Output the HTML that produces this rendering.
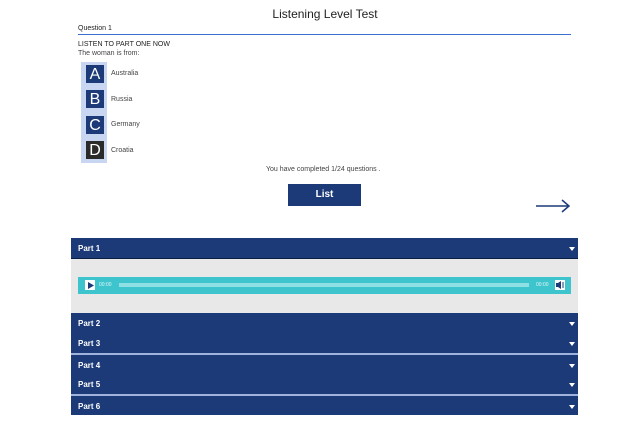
<!DOCTYPE html><html><head><style>
body{margin:0;width:640px;height:432px;background:#fff;font-family:"Liberation Sans",sans-serif;position:relative;overflow:hidden;color:#222}
.a{position:absolute}
.bar{position:absolute;left:71px;width:507px;background:#1c3a78;color:#fff;font-size:8px;font-weight:bold}
.bar span{position:absolute;left:7px;top:6px}
.bar i{position:absolute;right:3px;top:6px;width:6px;height:4px}
.box{position:absolute;left:86px;width:18px;height:18px;background:#1c3a78;color:#fff;font-size:16px;text-align:center;line-height:19px}
.opt{position:absolute;left:111px;font-size:7px;color:#444}
</style></head><body>
<div class="a" style="left:0;width:650px;top:7px;text-align:center;font-size:12px;color:#222">Listening Level Test</div>
<div class="a" style="left:78px;top:25px;font-size:7px">Question 1</div>
<div class="a" style="left:78px;top:34px;width:493px;height:1px;background:#3a6fd0"></div>
<div class="a" style="left:78px;top:41px;font-size:7px">LISTEN TO PART ONE NOW</div>
<div class="a" style="left:78px;top:50px;font-size:7px;color:#444">The woman is from:</div>
<div class="a" style="left:81px;top:62px;width:26px;height:101px;background:#c9d6f2"></div>
<div class="box" style="top:65px">A</div><div class="opt" style="top:70px">Australia</div>
<div class="box" style="top:90px">B</div><div class="opt" style="top:96px">Russia</div>
<div class="box" style="top:116px">C</div><div class="opt" style="top:121px">Germany</div>
<div class="box" style="top:141px;background:#2a2a2a">D</div><div class="opt" style="top:147px">Croatia</div>
<div class="a" style="left:266px;top:166px;font-size:7px;color:#444">You have completed 1/24 questions .</div>
<div class="a" style="left:288px;top:184px;width:73px;height:22px;background:#1c3a78;color:#fff;font-size:10px;font-weight:bold;text-align:center;line-height:22px">List</div>
<svg class="a" style="left:535px;top:199px" width="36" height="14"><path d="M1 7H34M27 1L34 7L27 13" stroke="#1c3a78" stroke-width="1.5" fill="none"/></svg>
<div class="bar" style="top:238px;height:20px;border-bottom:1px solid #0d1e45"><span>Part 1</span><i><svg width="6" height="4"><path d="M0 0H6L3 4Z" fill="#fff"/></svg></i></div>
<div class="a" style="left:71px;top:259px;width:507px;height:54px;background:#e8e8e8"></div>
<div class="a" style="left:78px;top:277px;width:493px;height:17px;background:#3ec4cc"></div>
<div class="a" style="left:85px;top:280px;width:10px;height:10px;background:#fff"></div>
<svg class="a" style="left:86px;top:281px" width="9" height="9"><path d="M2 1L8 4.5L2 8Z" fill="#1c3a78"/></svg>
<div class="a" style="left:99px;top:282px;font-size:5px;color:#e0f7f8">00:00</div>
<div class="a" style="left:119px;top:283px;width:410px;height:4px;background:#8ee0e5"></div>
<div class="a" style="left:536px;top:282px;font-size:5px;color:#e0f7f8">00:00</div>
<svg class="a" style="left:555px;top:280px" width="10" height="10"><rect width="10" height="10" fill="#fff"/><path d="M1 3H3L6 1V9L3 7H1Z" fill="#1c3a78"/><path d="M8 2V8" stroke="#1c3a78"/></svg>
<div class="bar" style="top:313px;height:20px"><span>Part 2</span><i><svg width="6" height="4"><path d="M0 0H6L3 4Z" fill="#fff"/></svg></i></div>
<div class="bar" style="top:333px;height:20px"><span>Part 3</span><i><svg width="6" height="4"><path d="M0 0H6L3 4Z" fill="#fff"/></svg></i></div>
<div class="a" style="left:71px;top:353px;width:507px;height:2px;background:#9fb3dc"></div>
<div class="bar" style="top:355px;height:19px"><span>Part 4</span><i><svg width="6" height="4"><path d="M0 0H6L3 4Z" fill="#fff"/></svg></i></div>
<div class="bar" style="top:374px;height:20px"><span>Part 5</span><i><svg width="6" height="4"><path d="M0 0H6L3 4Z" fill="#fff"/></svg></i></div>
<div class="a" style="left:71px;top:394px;width:507px;height:2px;background:#9fb3dc"></div>
<div class="bar" style="top:396px;height:19px"><span>Part 6</span><i><svg width="6" height="4"><path d="M0 0H6L3 4Z" fill="#fff"/></svg></i></div>
</body></html>
